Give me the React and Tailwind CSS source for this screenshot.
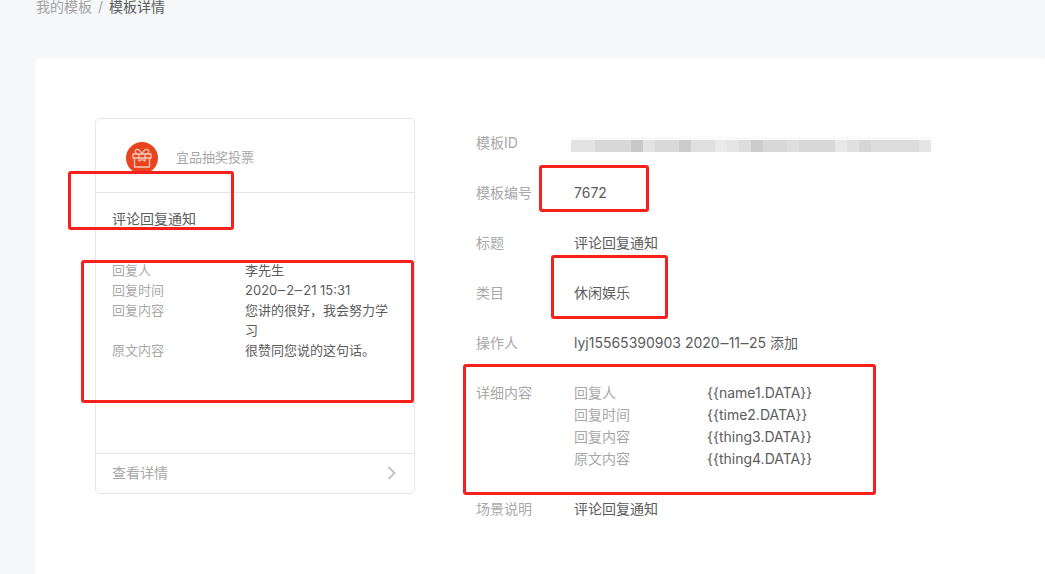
const FONT = "font-['Inter','Noto_Sans_CJK_SC',sans-serif]";

const mosaic = ['#e3e3e3','#e3e3e3','#d8d8d8','#d8d8d8','#d8d8d8','#c8c8c8','#e3e3e3','#d9d9d9','#d9d9d9','#cccccc','#e0e0e0','#e0e0e0','#eaeaea','#e4e4e4','#dddddd','#cccccc','#d8d8d8','#d8d8d8','#dedede','#d8d8d8','#d8d8d8','#d8d8d8','#e8e8e8','#e0e0e0','#d6d6d6','#dcdcdc','#dcdcdc','#dcdcdc','#dcdcdc','#e4e4e4'];

function Gift() {
  return (
    <svg width="32" height="32" viewBox="0 0 32 32" className="shrink-0">
      <circle cx="16" cy="16" r="16" fill="#e8451e" />
      <g fill="none" stroke="#f9c9ba" strokeWidth="1.300" strokeLinejoin="round">
        <path d="M7 12h18v4H7z" />
        <path d="M8.500 16v9h15v-9" />
        <path d="M13 12v7l3-1.500 3 1.500v-7" />
        <path d="M16 12c-1.500-3-3.500-5-5.500-4.500-2 .6-1.500 3.500 1 4.500" />
        <path d="M16 12c1.500-3 3.500-5 5.500-4.500 2 .6 1.500 3.500-1 4.500" />
      </g>
    </svg>
  );
}

function Dash() {
  return <span className="inline-block w-[9px] scale-x-[1.8] text-center">-</span>;
}

function PreviewRow({ label, children }) {
  return (
    <div className="flex text-[13px] leading-5">
      <div className="w-[133px] shrink-0 text-[#a8a8a8]">{label}</div>
      <div className="w-[150px] text-[#5c5c5c]">{children}</div>
    </div>
  );
}

function InfoRow({ label, children }) {
  return (
    <div className="flex text-sm leading-[22px]">
      <div className="w-[98px] shrink-0 text-[#a8a8a8]">{label}</div>
      <div className="text-[#5c5c5c]">{children}</div>
    </div>
  );
}

function DetailLine({ label, value }) {
  return (
    <div className="flex">
      <div className="w-[133px] shrink-0 text-[#a8a8a8]">{label}</div>
      <div>{value}</div>
    </div>
  );
}

function Mark({ className }) {
  return <div className={`absolute rounded-[3px] border-[3px] border-[#f8201a] ${className}`} />;
}

export default function App() {
  return (
    <div className={`relative h-[574px] w-[1045px] overflow-hidden bg-[#f6f7f9] ${FONT}`}>
      <div className="flex h-[58px] gap-[6px] pl-9 text-sm leading-[14px]">
        <span className="text-[#a3a3a3]">我的模板</span>
        <span className="text-[#a3a3a3]">/</span>
        <span className="text-[#5c5c5c]">模板详情</span>
      </div>

      <div className="ml-[35px] flex h-[516px] rounded-t-[4px] bg-white pl-[60px] pt-[60px]">
        <div className="flex h-[376px] w-[320px] shrink-0 flex-col rounded-[5px] border border-[#e6e6e9]">
          <div className="flex h-[74px] items-start gap-[18px] border-b border-[#e6e6e9] pl-[30px] pt-[23px]">
            <Gift />
            <span className="text-[13px] leading-[30px] text-[#a8a8a8]">宜品抽奖投票</span>
          </div>
          <div className="px-4 pt-[15px] text-sm leading-[22px] text-[#5c5c5c]">评论回复通知</div>
          <div className="mt-[30px] flex flex-col px-4">
            <PreviewRow label="回复人">李先生</PreviewRow>
            <PreviewRow label="回复时间">2020<Dash />2<Dash />21 15:31</PreviewRow>
            <PreviewRow label="回复内容">您讲的很好，我会努力学习</PreviewRow>
            <PreviewRow label="原文内容">很赞同您说的这句话。</PreviewRow>
          </div>
          <div className="mt-auto flex h-10 items-center justify-between border-t border-[#e6e6e9] pb-[2px] pl-4 pr-4 text-sm text-[#a8a8a8]">
            <span>查看详情</span>
            <svg width="12" height="16" viewBox="0 0 12 16" fill="none" stroke="#c4c4c4" strokeWidth="2">
              <path d="M2.500 2l6 6-6 6" />
            </svg>
          </div>
        </div>

        <div className="ml-[61px] flex flex-col gap-7 pt-[14px]">
          <InfoRow label="模板ID">
            <svg width="360" height="22" viewBox="0 0 360 22" className="-ml-[3px] block">
              <rect x="0" y="5" width="360" height="3" fill="#fafafa" />
              {mosaic.map((c, i) => (
                <rect key={i} x={i * 12} y="8" width="12" height="12" fill={c} />
              ))}
            </svg>
          </InfoRow>
          <InfoRow label="模板编号">7672</InfoRow>
          <InfoRow label="标题">评论回复通知</InfoRow>
          <InfoRow label="类目">休闲娱乐</InfoRow>
          <InfoRow label="操作人">lyj15565390903 2020<Dash />11<Dash />25 添加</InfoRow>
          <InfoRow label="详细内容">
            <DetailLine label="回复人" value="{{name1.DATA}}" />
            <DetailLine label="回复时间" value="{{time2.DATA}}" />
            <DetailLine label="回复内容" value="{{thing3.DATA}}" />
            <DetailLine label="原文内容" value="{{thing4.DATA}}" />
          </InfoRow>
          <InfoRow label="场景说明">评论回复通知</InfoRow>
        </div>
      </div>

      <Mark className="left-[68px] top-[171px] h-[59px] w-[166px]" />
      <Mark className="left-[81px] top-[260px] h-[143px] w-[333px]" />
      <Mark className="left-[539px] top-[165px] h-[47px] w-[110px]" />
      <Mark className="left-[551px] top-[255px] h-[64px] w-[117px]" />
      <Mark className="left-[463px] top-[364px] h-[131px] w-[413px]" />
    </div>
  );
}
